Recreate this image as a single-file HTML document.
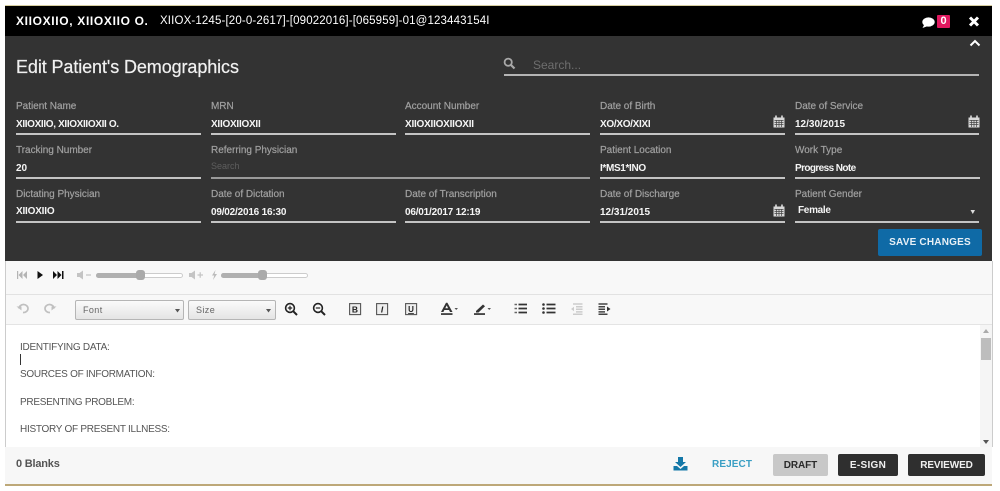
<!DOCTYPE html>
<html><head><meta charset="utf-8">
<style>
html,body{margin:0;padding:0;background:#fff;}
#p{position:relative;width:1000px;height:491px;overflow:hidden;background:#fff;font-family:"Liberation Sans",sans-serif;filter:blur(.3px);}
#p div,#p span.a,#p svg{position:absolute;}
.t{white-space:nowrap;}
.l{font-size:10px;color:#a0a0a0;font-weight:400;letter-spacing:-.02px;white-space:nowrap;line-height:12px;margin-top:2px;-webkit-text-stroke:.2px #a0a0a0;}
.v{font-size:10px;color:#f5f5f5;font-weight:700;white-space:nowrap;line-height:12px;margin-top:2px;}
.u{height:2px;background:#c4c4c4;}
.e{font-size:10px;color:#555;white-space:nowrap;line-height:12px;left:20px;letter-spacing:-.27px;margin-top:2px;}
.btn{border-radius:2px;font-size:10px;font-weight:700;text-align:center;letter-spacing:.3px;white-space:nowrap;}
.sel{background:linear-gradient(#fafafa,#e4e4e4);border:1px solid #b5b5b5;border-radius:2px;box-sizing:border-box;font-size:9px;color:#666;line-height:18px;padding-left:7px;letter-spacing:.4px;}
</style></head><body>
<div id="p">
<div style="left:5px;top:5px;width:987px;height:1px;background:#d8cfa0"></div>
<div style="left:5px;top:6px;width:987px;height:30px;background:#000"></div>
<div style="left:5px;top:36px;width:987px;height:225px;background:#333"></div>
<div style="left:5px;top:261px;width:987px;height:34px;background:#f8f8f8"></div>
<div style="left:5px;top:294px;width:987px;height:1px;background:#e2e2e2"></div>
<div style="left:5px;top:295px;width:987px;height:30px;background:#f8f8f8"></div>
<div style="left:5px;top:324px;width:987px;height:1px;background:#e4e4e4"></div>
<div style="left:5px;top:261px;width:1px;height:186px;background:#ccc"></div>
<div style="left:992px;top:261px;width:1px;height:186px;background:#ccc"></div>
<div style="left:5px;top:447px;width:987px;height:37px;background:#f7f7f7"></div>
<div style="left:5px;top:484px;width:987px;height:2px;background:#bda878"></div>

<div class="t" style="left:16px;top:14px;font-size:12px;font-weight:700;color:#fff;letter-spacing:.66px;line-height:15px">XIIOXIIO, XIIOXIIO O.</div>
<div class="t" style="left:160px;top:14px;font-size:11.5px;color:#fff;line-height:15px;letter-spacing:.14px">XIIOX-1245-[20-0-2617]-[09022016]-[065959]-01@123443154I</div>

<svg style="left:921px;top:16px" width="16" height="13" viewBox="0 0 16 13"><ellipse cx="7.5" cy="6" rx="6.2" ry="4.6" fill="#fff"/><path d="M3 9 L1.5 12 L7 10Z" fill="#fff"/></svg>
<div style="left:937px;top:15px;width:13px;height:13px;background:#e0185f;border-radius:1px;color:#fff;font-size:11px;font-weight:700;text-align:center;line-height:13px">0</div>
<svg style="left:968px;top:16px" width="12" height="11" viewBox="0 0 12 11"><path d="M2 1.5 L10 9.5 M10 1.5 L2 9.5" stroke="#fff" stroke-width="3"/></svg>
<svg style="left:969px;top:39px" width="12" height="8" viewBox="0 0 12 8"><path d="M1.5 6.5 L6 2 L10.5 6.5" stroke="#fff" stroke-width="2" fill="none"/></svg>

<div class="t" style="left:16px;top:56px;font-size:18px;color:#f0f0f0;line-height:22px;letter-spacing:-.1px;-webkit-text-stroke:.2px #f0f0f0">Edit Patient's Demographics</div>

<svg style="left:503px;top:57px" width="13" height="13" viewBox="0 0 13 13"><circle cx="5.2" cy="5.2" r="3.6" stroke="#a8a8a8" stroke-width="1.8" fill="none"/><path d="M8 8 L11.5 11.5" stroke="#a8a8a8" stroke-width="2.2"/></svg>
<div class="t" style="left:533px;top:58px;font-size:12px;color:#6e6e6e;line-height:14px">Search...</div>
<div class="u" style="left:504px;top:74px;width:475px;background:#b4b4b4"></div>

<!-- row 1 -->
<div class="l" style="left:16px;top:99px">Patient Name</div>
<div class="v" style="left:16px;top:117px;letter-spacing:-.35px">XIIOXIIO, XIIOXIIOXII O.</div>
<div class="u" style="left:16px;top:133px;width:185px"></div>
<div class="l" style="left:211px;top:99px">MRN</div>
<div class="v" style="left:211px;top:117px;letter-spacing:-.25px">XIIOXIIOXII</div>
<div class="u" style="left:211px;top:133px;width:185px"></div>
<div class="l" style="left:405px;top:99px">Account Number</div>
<div class="v" style="left:405px;top:117px;letter-spacing:-.23px">XIIOXIIOXIIOXII</div>
<div class="u" style="left:405px;top:133px;width:185px"></div>
<div class="l" style="left:600px;top:99px">Date of Birth</div>
<div class="v" style="left:600px;top:117px;letter-spacing:-.3px">XO/XO/XIXI</div>
<div class="u" style="left:600px;top:133px;width:185px"></div>
<div class="l" style="left:795px;top:99px">Date of Service</div>
<div class="v" style="left:795px;top:117px">12/30/2015</div>
<div class="u" style="left:795px;top:133px;width:184px"></div>

<!-- row 2 -->
<div class="l" style="left:16px;top:143px">Tracking Number</div>
<div class="v" style="left:16px;top:161px">20</div>
<div class="u" style="left:16px;top:177px;width:185px"></div>
<div class="l" style="left:211px;top:143px">Referring Physician</div>
<div class="t" style="left:211px;top:160px;font-size:9px;color:#5e5e5e;line-height:12px">Search</div>
<div class="u" style="left:211px;top:177px;width:379px;background:#9a9a9a"></div>
<div class="l" style="left:600px;top:143px">Patient Location</div>
<div class="v" style="left:600px;top:161px;letter-spacing:-.35px">I*MS1*INO</div>
<div class="u" style="left:600px;top:177px;width:185px"></div>
<div class="l" style="left:795px;top:143px">Work Type</div>
<div class="v" style="left:795px;top:161px;letter-spacing:-.6px">Progress Note</div>
<div class="u" style="left:795px;top:177px;width:185px"></div>

<!-- row 3 -->
<div class="l" style="left:16px;top:187px">Dictating Physician</div>
<div class="v" style="left:16px;top:204px;letter-spacing:-.2px">XIIOXIIO</div>
<div class="u" style="left:16px;top:221px;width:185px"></div>
<div class="l" style="left:211px;top:187px">Date of Dictation</div>
<div class="v" style="left:211px;top:205px;letter-spacing:-.2px">09/02/2016 16:30</div>
<div class="u" style="left:211px;top:221px;width:185px"></div>
<div class="l" style="left:405px;top:187px">Date of Transcription</div>
<div class="v" style="left:405px;top:205px;letter-spacing:-.2px">06/01/2017 12:19</div>
<div class="u" style="left:405px;top:221px;width:185px"></div>
<div class="l" style="left:600px;top:187px">Date of Discharge</div>
<div class="v" style="left:600px;top:205px">12/31/2015</div>
<div class="u" style="left:600px;top:221px;width:185px"></div>
<div class="l" style="left:795px;top:187px">Patient Gender</div>
<div class="v" style="left:798px;top:203px;letter-spacing:-.3px">Female</div>
<div class="u" style="left:795px;top:221px;width:184px"></div>
<svg style="left:970px;top:209px" width="6" height="6" viewBox="0 0 6 6"><path d="M.5 1 H5 L2.8 5Z" fill="#ddd"/></svg>

<!-- calendars -->
<svg style="left:773px;top:115px" width="12" height="13" viewBox="0 0 12 13"><path d="M.5 2.5H11.5V12.5H.5Z" fill="#d8d8d8"/><path d="M1.5 5.5H10.5M1.5 7.5H10.5M1.5 9.5H10.5M3.5 5V12M6 5V12M8.5 5V12" stroke="#444" stroke-width=".7"/><path d="M3 .5V3M9 .5V3" stroke="#ddd" stroke-width="1.6"/></svg>
<svg style="left:968px;top:115px" width="12" height="13" viewBox="0 0 12 13"><path d="M.5 2.5H11.5V12.5H.5Z" fill="#d8d8d8"/><path d="M1.5 5.5H10.5M1.5 7.5H10.5M1.5 9.5H10.5M3.5 5V12M6 5V12M8.5 5V12" stroke="#444" stroke-width=".7"/><path d="M3 .5V3M9 .5V3" stroke="#ddd" stroke-width="1.6"/></svg>
<svg style="left:773px;top:204px" width="12" height="13" viewBox="0 0 12 13"><path d="M.5 2.5H11.5V12.5H.5Z" fill="#d8d8d8"/><path d="M1.5 5.5H10.5M1.5 7.5H10.5M1.5 9.5H10.5M3.5 5V12M6 5V12M8.5 5V12" stroke="#444" stroke-width=".7"/><path d="M3 .5V3M9 .5V3" stroke="#ddd" stroke-width="1.6"/></svg>

<div class="btn" style="left:878px;top:229px;width:104px;height:27px;background:#0f6aa6;color:#e8f0f6;line-height:28px;font-size:10px;letter-spacing:.2px">SAVE CHANGES</div>

<!-- player -->
<svg style="left:16px;top:270px" width="50" height="10" viewBox="0 0 50 10">
<path d="M1 1V9H2.2V1ZM6.5 1 L2.5 5 L6.5 9ZM11 1 L7 5 L11 9Z" fill="#b4b4b4"/>
<path d="M21.5 1 L27 5 L21.5 9Z" fill="#111"/>
<path d="M37 1 L41 5 L37 9ZM41.5 1 L45.5 5 L41.5 9ZM46 1V9H47.5V1Z" fill="#111"/>
</svg>
<svg style="left:77px;top:270px" width="15" height="10" viewBox="0 0 15 10"><path d="M0 3H2.5L6 .5V9.5L2.5 7H0Z" fill="#c4c4c4"/><path d="M9 5H14" stroke="#c4c4c4" stroke-width="1.2"/></svg>
<div style="left:96px;top:273px;width:87px;height:5px;background:#fff;border:1px solid #ccc;border-radius:4px;box-sizing:border-box"></div>
<div style="left:96px;top:273px;width:44px;height:5px;background:#b0b0b0;border-radius:3px"></div>
<div style="left:136px;top:270px;width:9px;height:10px;background:#aaa;border-radius:3px"></div>
<svg style="left:189px;top:270px" width="15" height="10" viewBox="0 0 15 10"><path d="M0 3H2.5L6 .5V9.5L2.5 7H0Z" fill="#c4c4c4"/><path d="M8.5 5H14M11.2 2.3V7.7" stroke="#c4c4c4" stroke-width="1.2"/></svg>
<svg style="left:211px;top:270px" width="7" height="10" viewBox="0 0 7 10"><path d="M4.5 0 L1 5.5H3.2L2 10 L6 4H3.6Z" fill="#bbb"/></svg>
<div style="left:221px;top:273px;width:87px;height:5px;background:#fff;border:1px solid #ccc;border-radius:4px;box-sizing:border-box"></div>
<div style="left:221px;top:273px;width:43px;height:5px;background:#b0b0b0;border-radius:3px"></div>
<div style="left:258px;top:270px;width:9px;height:10px;background:#aaa;border-radius:3px"></div>

<!-- toolbar -->
<svg style="left:16px;top:303px" width="14" height="11" viewBox="0 0 14 11"><path d="M3 5.5 A4.5 4 0 1 1 7 9.5" stroke="#c0c0c0" stroke-width="1.7" fill="none"/><path d="M.5 3.5H5.5V7.5Z" fill="#c0c0c0"/></svg>
<svg style="left:43px;top:303px" width="14" height="11" viewBox="0 0 14 11"><path d="M11 5.5 A4.5 4 0 1 0 7 9.5" stroke="#c0c0c0" stroke-width="1.7" fill="none"/><path d="M13.5 3.5H8.5V7.5Z" fill="#c0c0c0"/></svg>
<div class="sel" style="left:75px;top:300px;width:109px;height:20px">Font</div>
<svg style="left:175px;top:309px" width="5" height="4"><path d="M0 0H5L2.5 3.5Z" fill="#555"/></svg>
<div class="sel" style="left:188px;top:300px;width:88px;height:20px">Size</div>
<svg style="left:266px;top:309px" width="5" height="4"><path d="M0 0H5L2.5 3.5Z" fill="#555"/></svg>
<svg style="left:284px;top:302px" width="14" height="14" viewBox="0 0 14 14"><circle cx="6" cy="6" r="4.4" stroke="#222" stroke-width="1.6" fill="none"/><path d="M9.3 9.3 L13 13" stroke="#222" stroke-width="2"/><path d="M3.8 6H8.2M6 3.8V8.2" stroke="#222" stroke-width="1.2"/></svg>
<svg style="left:312px;top:302px" width="14" height="14" viewBox="0 0 14 14"><circle cx="6" cy="6" r="4.4" stroke="#222" stroke-width="1.6" fill="none"/><path d="M9.3 9.3 L13 13" stroke="#222" stroke-width="2"/><path d="M3.8 6H8.2" stroke="#222" stroke-width="1.2"/></svg>

<svg style="left:349px;top:302px;font-family:'Liberation Sans',sans-serif" width="70" height="14" viewBox="0 0 70 14">
<rect x=".6" y="1.6" width="11" height="11" fill="#eee" stroke="#555" stroke-width="1.1"/>
<text x="6" y="10.5" font-size="8.5" font-weight="700" fill="#222" text-anchor="middle">B</text>
<rect x="27.6" y="1.6" width="11" height="11" fill="#eee" stroke="#555" stroke-width="1.1"/>
<text x="33" y="10.5" font-size="8.5" font-weight="700" font-style="italic" fill="#222" text-anchor="middle">I</text>
<rect x="56.6" y="1.6" width="11" height="11" fill="#eee" stroke="#555" stroke-width="1.1"/>
<text x="62" y="10" font-size="8" font-weight="700" fill="#222" text-anchor="middle" text-decoration="underline">U</text>
</svg>

<svg style="left:440px;top:302px" width="20" height="14" viewBox="0 0 20 14"><path d="M1 10 L6 .8 H7.4 L12.5 10 H10 L9 8 H4.4 L3.4 10ZM5.3 6.2H8.1L6.7 3.4Z" fill="#333"/><rect x="1" y="11.2" width="11.5" height="1.7" fill="#333"/><path d="M14.5 6H18L16.2 8Z" fill="#555"/></svg>
<svg style="left:473px;top:302px" width="20" height="14" viewBox="0 0 20 14"><path d="M3 9 L10 2.5 L12 4.2 L5.5 10.5 L3 10.5Z" fill="#333"/><rect x="1" y="11.2" width="11" height="1.7" fill="#333"/><path d="M14.5 6H18L16.2 8Z" fill="#555"/></svg>

<svg style="left:514px;top:303px" width="14" height="12" viewBox="0 0 14 12"><path d="M4.5 1.5H13M4.5 5.5H13M4.5 9.5H13" stroke="#333" stroke-width="1.8"/><path d="M.5 1.5H3M.5 5.5H3M.5 9.5H3" stroke="#666" stroke-width="1.5"/></svg>
<svg style="left:542px;top:303px" width="14" height="12" viewBox="0 0 14 12"><path d="M4.5 1.5H13.5M4.5 5.5H13.5M4.5 9.5H13.5" stroke="#333" stroke-width="1.8"/><circle cx="1.5" cy="1.5" r="1.3" fill="#333"/><circle cx="1.5" cy="5.5" r="1.3" fill="#333"/><circle cx="1.5" cy="9.5" r="1.3" fill="#333"/></svg>
<svg style="left:570px;top:303px" width="13" height="12" viewBox="0 0 13 12"><path d="M3 1H12.5M6 3.7H12.5M6 6.3H12.5M6 8.9H12.5M3 11.2H12.5" stroke="#ccc" stroke-width="1.5"/><path d="M4 3.8V8.2L1 6Z" fill="#ccc"/></svg>
<svg style="left:598px;top:303px" width="13" height="12" viewBox="0 0 13 12"><path d="M.5 1H9.5M.5 3.7H7M.5 6.3H7M.5 8.9H7M.5 11.2H9.5" stroke="#444" stroke-width="1.5"/><path d="M9 3.5V8.5L12.5 6Z" fill="#333"/></svg>

<!-- editor -->
<div class="e" style="top:340px">IDENTIFYING DATA:</div>
<div style="left:20px;top:354px;width:1px;height:11px;background:#333"></div>
<div class="e" style="top:367px">SOURCES OF INFORMATION:</div>
<div class="e" style="top:395px">PRESENTING PROBLEM:</div>
<div class="e" style="top:422px">HISTORY OF PRESENT ILLNESS:</div>

<!-- scrollbar -->
<div style="left:980px;top:325px;width:12px;height:122px;background:#f5f5f5"></div>
<svg style="left:983px;top:329px" width="6" height="4"><path d="M0 4H6L3 0Z" fill="#aaa"/></svg>
<div style="left:981px;top:338px;width:10px;height:22px;background:#bdbdbd"></div>
<svg style="left:983px;top:440px" width="6" height="4"><path d="M0 0H6L3 4Z" fill="#555"/></svg>

<!-- footer -->
<div class="t" style="left:16px;top:457px;font-size:11px;font-weight:700;color:#555;line-height:14px;letter-spacing:-.2px">0 Blanks</div>
<svg style="left:673px;top:457px" width="15" height="14" viewBox="0 0 15 14"><path d="M5 0H10V5H13L7.5 10 L2 5H5Z" fill="#1478a8"/><path d="M.5 9H4L7.5 12 L11 9H14.5V13.5H.5Z" fill="#1478a8"/></svg>
<div class="t" style="left:712px;top:458px;font-size:10px;font-weight:700;color:#3a9fc4;line-height:14px;letter-spacing:.1px">REJECT</div>
<div class="btn" style="left:773px;top:454px;width:55px;height:22px;background:#c8c8c8;color:#2a2a2a;line-height:23px;letter-spacing:-.1px">DRAFT</div>
<div class="btn" style="left:838px;top:454px;width:60px;height:22px;background:#2f2f2f;color:#f0f0f0;line-height:23px;letter-spacing:.3px">E-SIGN</div>
<div class="btn" style="left:908px;top:454px;width:77px;height:22px;background:#2f2f2f;color:#f0f0f0;line-height:23px;letter-spacing:-.1px">REVIEWED</div>
</div>
</body></html>
